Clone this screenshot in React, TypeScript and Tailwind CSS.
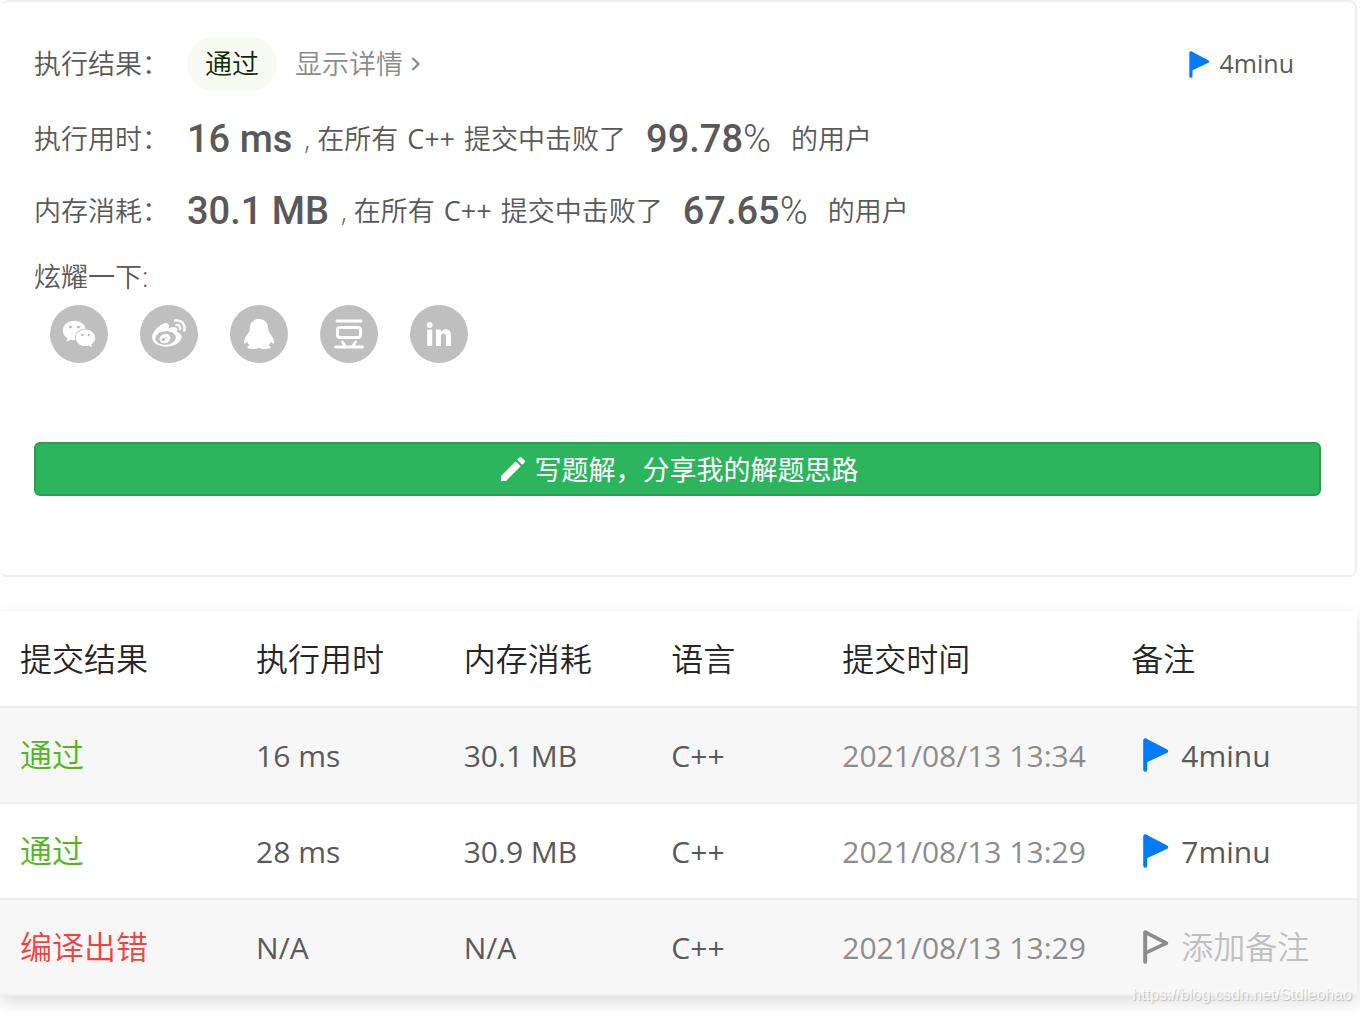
import type { ReactNode } from "react";
import { FaWeibo, FaWeixin } from "react-icons/fa";
import { MdModeEdit } from "react-icons/md";

interface Submission {
  status: string;
  accepted: boolean;
  runtime: string;
  memory: string;
  language: string;
  time: string;
  note?: string;
}

interface StatRowProps {
  label: string;
  value: string;
  percent: string;
}

const SUBMISSIONS: Submission[] = [
  { status: "通过", accepted: true, runtime: "16 ms", memory: "30.1 MB", language: "C++", time: "2021/08/13 13:34", note: "4minu" },
  { status: "通过", accepted: true, runtime: "28 ms", memory: "30.9 MB", language: "C++", time: "2021/08/13 13:29", note: "7minu" },
  { status: "编译出错", accepted: false, runtime: "N/A", memory: "N/A", language: "C++", time: "2021/08/13 13:29" },
];

const COLUMNS = [
  { title: "提交结果", width: "w-[17.4%]" },
  { title: "执行用时", width: "w-[15.3%]" },
  { title: "内存消耗", width: "w-[15.3%]" },
  { title: "语言", width: "w-[12.6%]" },
  { title: "提交时间", width: "w-[21.3%]" },
  { title: "备注", width: "w-[18.1%]" },
];

function FlagIcon({ className, filled = true }: { className: string; filled?: boolean }) {
  return (
    <svg viewBox="0 0 26 34" className={className} aria-hidden="true">
      <path
        d="M2.2 2.2 L23.4 13.2 L2.2 23.2"
        fill={filled ? "currentColor" : "none"}
        stroke="currentColor"
        strokeWidth="3.6"
        strokeLinejoin="round"
      />
      <path d="M2.2 2.2 V31.8" stroke="currentColor" strokeWidth="4" strokeLinecap="round" />
    </svg>
  );
}

function QqIcon() {
  return (
    <svg viewBox="0 0 32 32" className="size-8" fill="currentColor" aria-hidden="true">
      <path d="M16 1 C10.5 1 6.8 5 6.8 10.3 C6.8 12 6.4 13.4 5.4 14.8 C3 18 1 21.2 1 23.8 C1 25.6 1.6 26 2.3 25.6 C3.1 25.1 3.8 24.3 4.3 23.5 C4.7 24.9 5.5 26.2 6.6 27.2 C5.2 27.7 4.4 28.4 4.4 29.3 C4.4 30.5 6.4 31 9.6 31 C12.4 31 14.6 30.6 16 29.8 C17.4 30.6 19.6 31 22.4 31 C25.6 31 27.6 30.5 27.6 29.3 C27.6 28.4 26.8 27.7 25.4 27.2 C26.5 26.2 27.3 24.9 27.7 23.5 C28.2 24.3 28.9 25.1 29.7 25.6 C30.4 26 31 25.6 31 23.8 C31 21.2 29 18 26.6 14.8 C25.6 13.4 25.2 12 25.2 10.3 C25.2 5 21.5 1 16 1 Z" />
    </svg>
  );
}

function DoubanIcon() {
  return (
    <svg viewBox="0 0 30 30" className="size-[30px]" fill="none" stroke="currentColor" strokeLinecap="round" aria-hidden="true">
      <path strokeWidth="2.8" d="M3 2 H27 M1.5 28 H28.5 M8.5 23 L11 27 M21.5 23 L19 27" />
      <rect strokeWidth="3" x="3.5" y="8.5" width="23" height="10" rx="2.5" />
    </svg>
  );
}

function LinkedinIcon() {
  return (
    <svg viewBox="0 0 26 26" className="size-[26px]" fill="currentColor" aria-hidden="true">
      <circle cx="3.7" cy="4" r="2.9" />
      <rect x="1.2" y="8.6" width="5" height="16.4" />
      <path d="M10 8.6 H14.8 V10.9 C15.8 9.2 17.5 8.2 19.6 8.2 C23.4 8.2 25 10.6 25 14.6 V25 H20 V15.8 C20 13.6 19.3 12.4 17.6 12.4 C15.8 12.4 15 13.8 15 15.9 V25 H10 Z" />
    </svg>
  );
}

const SHARES: { name: string; icon: ReactNode }[] = [
  { name: "微信", icon: <FaWeixin className="size-[34px]" /> },
  { name: "微博", icon: <FaWeibo className="size-[34px]" /> },
  { name: "QQ", icon: <QqIcon /> },
  { name: "豆瓣", icon: <DoubanIcon /> },
  { name: "LinkedIn", icon: <LinkedinIcon /> },
];

function StatRow({ label, value, percent }: StatRowProps) {
  return (
    <div className="flex h-[72px] items-center">
      <span className="w-[153px]">{label}：</span>
      <span className="font-[Roboto,sans-serif] text-[38px] font-medium">{value}</span>
      <span className="ml-3">
        , 在所有 <span className="px-0.5 font-normal">C++</span> 提交中击败了
      </span>
      <span className="ml-5 font-[Roboto,sans-serif] text-[38px] font-medium">
        {percent}
        <span className="font-light">%</span>
      </span>
      <span className="ml-5">的用户</span>
    </div>
  );
}

function ResultCard() {
  return (
    <section className="rounded-lg border-y-2 border-r-2 border-[#efefef] bg-white px-[34px] pt-[35px] pb-[79px] text-[27px] text-[#595959]">
      <div className="flex h-[54px] items-center">
        <span className="w-[153px]">执行结果：</span>
        <span className="flex h-[54px] items-center rounded-full bg-[#f8fbf4] px-[18px] text-[#0f2a00]">通过</span>
        <a href="#detail" className="ml-[18px] flex items-center gap-2 text-[#8c8c8c]">
          显示详情
          <svg viewBox="0 0 10 14" className="h-3.5 w-2.5" fill="none" stroke="currentColor" strokeWidth="2.2" aria-hidden="true">
            <path d="M1.5 1 L7.5 7 L1.5 13" />
          </svg>
        </a>
        <button type="button" className="mr-[27px] ml-auto flex items-center gap-2.5 text-[25px] font-normal">
          <FlagIcon className="h-[27px] w-[21px] text-[#007aff]" />
          4minu
        </button>
      </div>

      <div className="mt-3">
        <StatRow label="执行用时" value="16 ms" percent="99.78" />
        <StatRow label="内存消耗" value="30.1 MB" percent="67.65" />
      </div>

      <p className="mt-2.5 leading-[40px]">炫耀一下:</p>
      <div className="mt-2 flex gap-8 pl-4">
        {SHARES.map((share) => (
          <button
            key={share.name}
            type="button"
            aria-label={share.name}
            className="flex size-[58px] items-center justify-center rounded-full bg-[#bfbfbf] text-white"
          >
            {share.icon}
          </button>
        ))}
      </div>

      <button
        type="button"
        className="mt-[79px] flex h-[54px] w-full items-center justify-center gap-1.5 rounded-md border-2 border-[#2f9a54] bg-[#2db55d] font-normal text-white"
      >
        <MdModeEdit className="size-8" />
        <span className="pt-0.5">写题解，分享我的解题思路</span>
      </button>
    </section>
  );
}

function SubmissionTable() {
  return (
    <table className="w-full table-fixed bg-white text-left text-[30px] font-normal text-[#595959] shadow-[0_6px_16px_rgba(0,0,0,0.14)]">
      <thead>
        <tr className="h-24 border-b-2 border-[#efefef] text-[32px] text-[#262626]">
          {COLUMNS.map((column) => (
            <th key={column.title} className={`${column.width} pl-5 font-[350]`}>
              {column.title}
            </th>
          ))}
        </tr>
      </thead>
      <tbody>
        {SUBMISSIONS.map((item, index) => (
          <tr key={index} className="h-24 border-b-2 border-[#efefef] whitespace-nowrap odd:bg-[#f7f7f7]">
            <td className="pl-5 text-[32px] font-[350]">
              <a href="#submission" className={item.accepted ? "text-[#52b51e]" : "text-[#f5413d]"}>
                {item.status}
              </a>
            </td>
            <td className="pl-5">{item.runtime}</td>
            <td className="pl-5">{item.memory}</td>
            <td className="pl-5">{item.language}</td>
            <td className="pl-5 text-[#8c8c8c]">{item.time}</td>
            <td className="pl-8">
              <button type="button" className="flex items-center gap-3">
                <FlagIcon
                  className={`h-[34px] w-[26px] ${item.note ? "text-[#007aff]" : "text-[#8c8c8c]"}`}
                  filled={Boolean(item.note)}
                />
                {item.note ?? <span className="text-[32px] font-[350] text-[#bfbfbf]">添加备注</span>}
              </button>
            </td>
          </tr>
        ))}
      </tbody>
    </table>
  );
}

export default function App() {
  return (
    <main className="relative overflow-hidden bg-white pr-[3px] pb-[17px] font-['Open_Sans','Noto_Sans_CJK_SC',sans-serif] font-[350]">
      <ResultCard />
      <div className="mt-[34px]">
        <SubmissionTable />
      </div>
      <span className="absolute right-2 bottom-1.5 font-['Liberation_Sans',sans-serif] text-base text-white/80 [text-shadow:1px_1px_1px_rgba(0,0,0,0.2)]">
        https://blog.csdn.net/Stdleohao
      </span>
    </main>
  );
}
